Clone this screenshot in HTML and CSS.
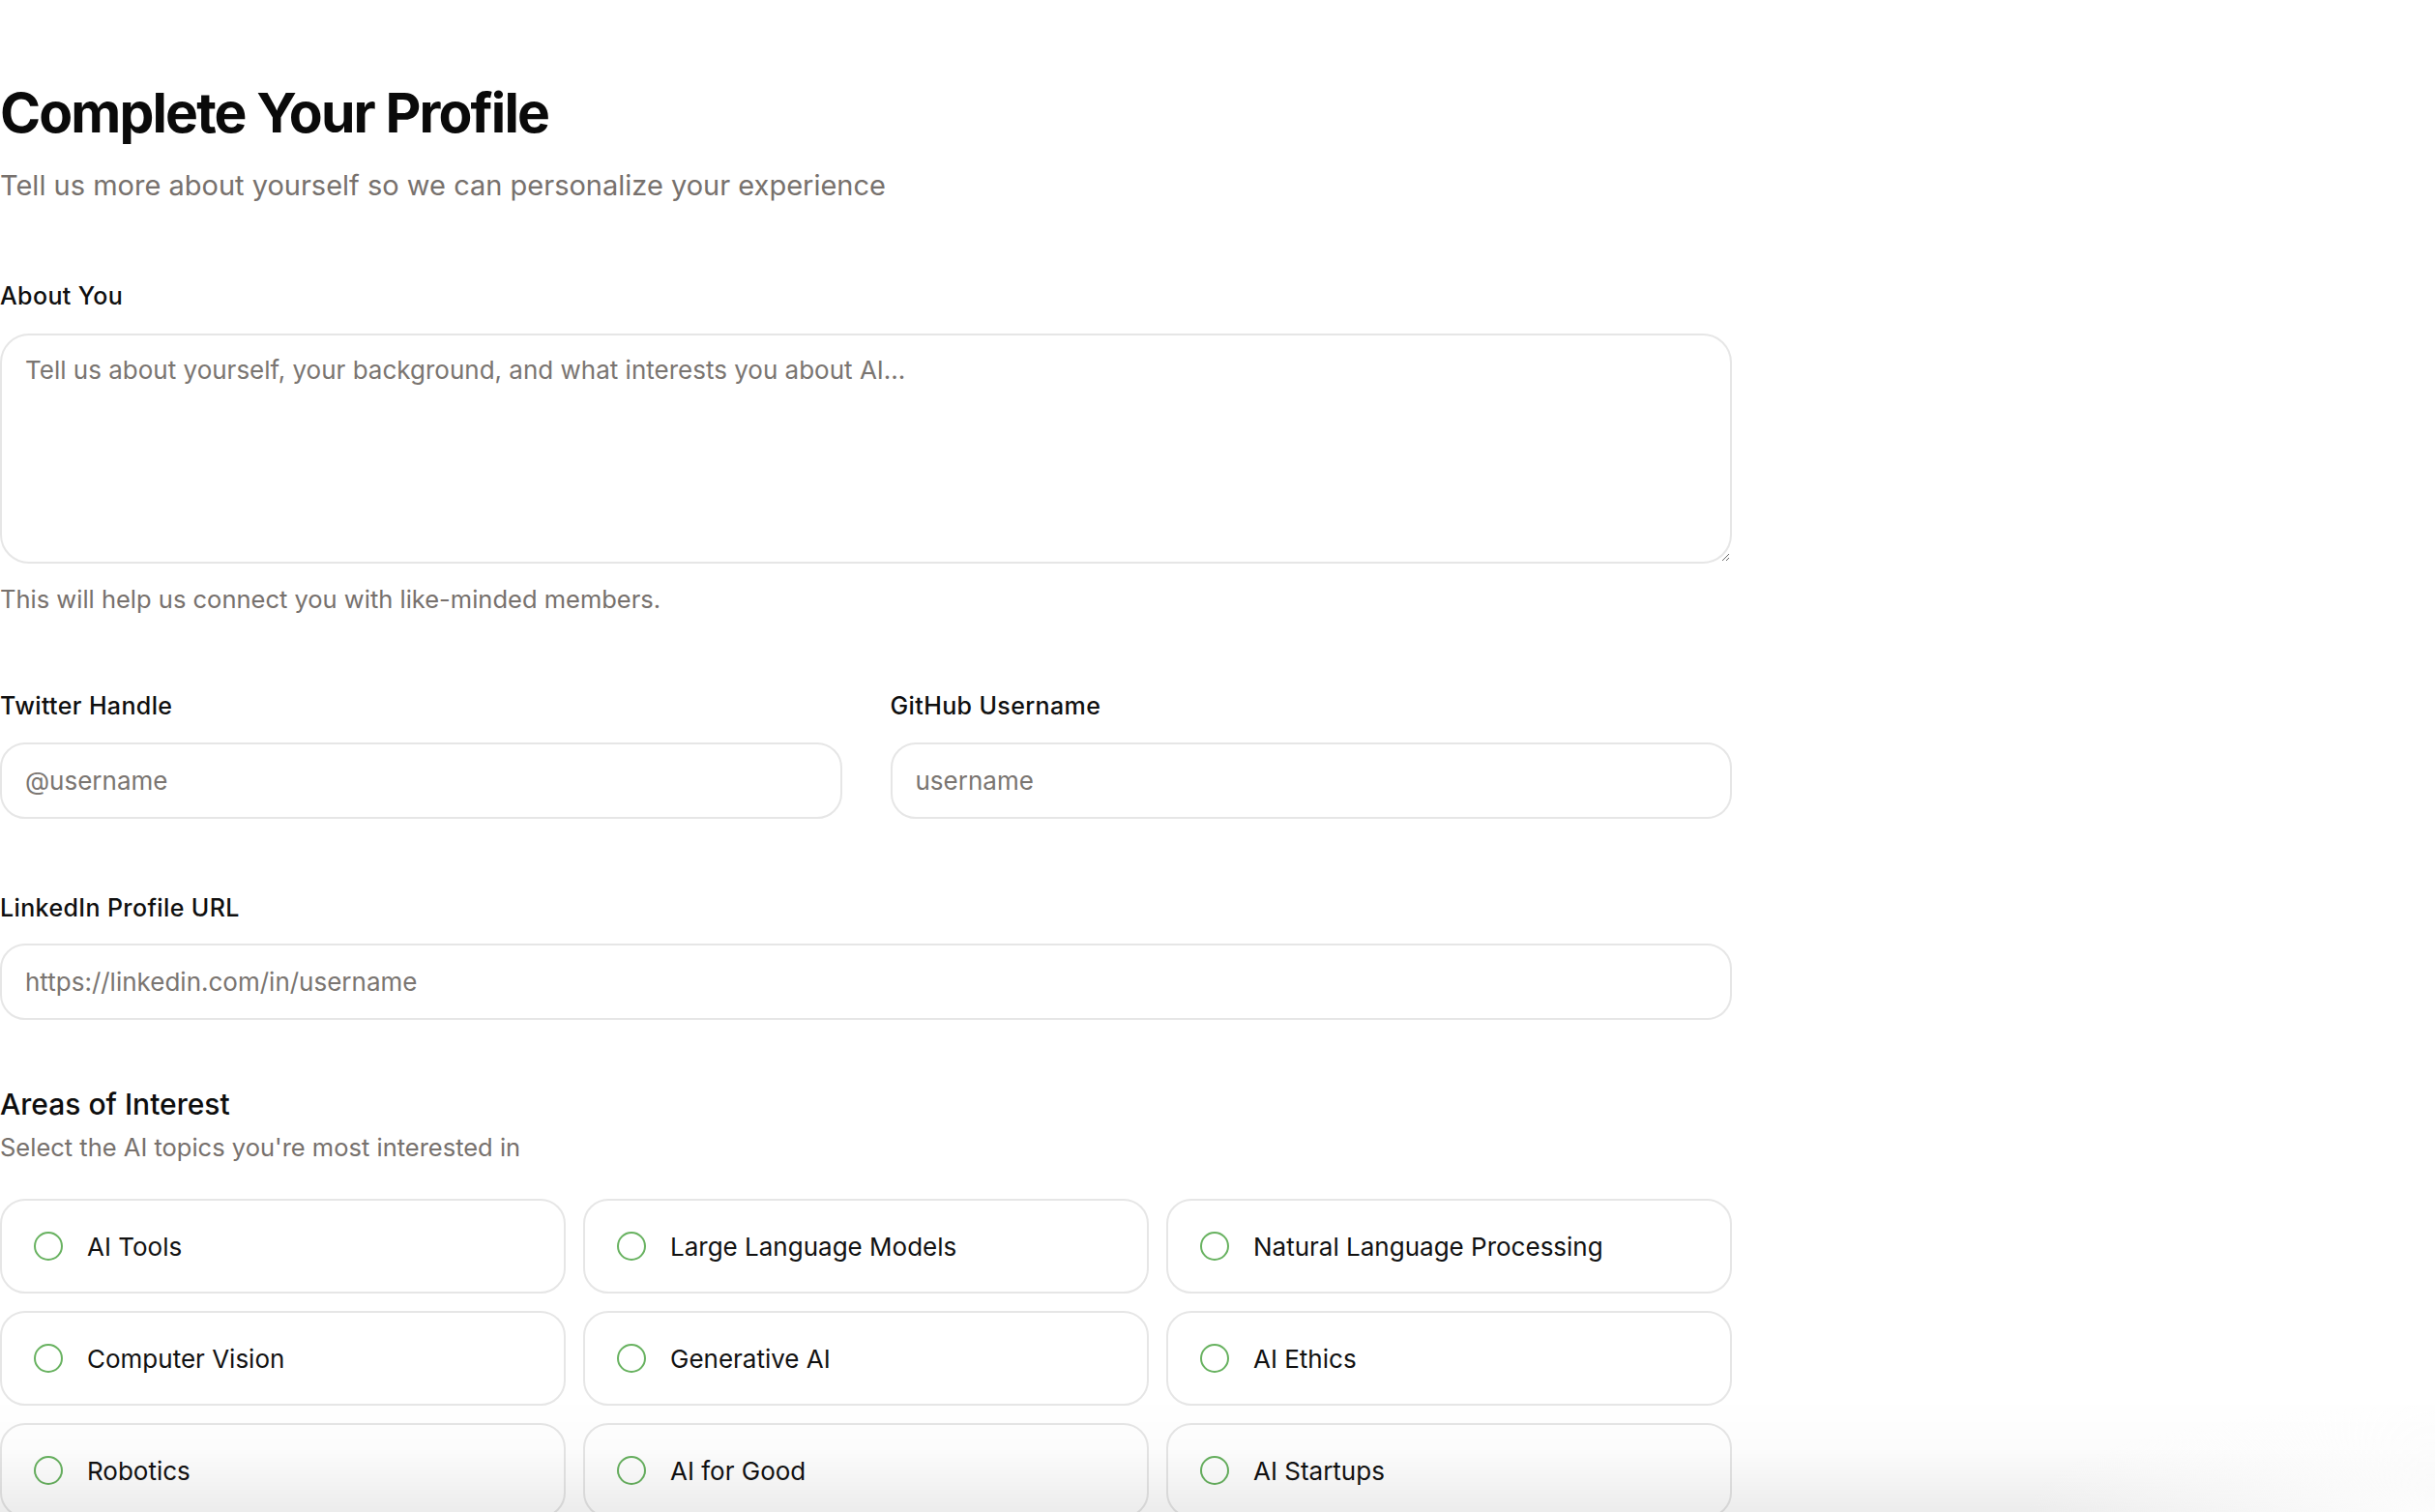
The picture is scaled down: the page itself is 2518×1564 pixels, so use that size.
FILE: index.html
```html
<!DOCTYPE html>
<html lang="en">
<head>
<meta charset="utf-8">
<title>Complete Your Profile</title>
<link rel="stylesheet" href="styles.css">
</head>
<body>
<main class="profile">
  <header class="intro">
    <h1 class="intro-title">Complete Your Profile</h1>
    <p class="intro-sub">Tell us more about yourself so we can personalize your experience</p>
  </header>

  <div class="field field-about">
    <label class="field-label" for="about">About You</label>
    <textarea id="about" class="control control-area" placeholder="Tell us about yourself, your background, and what interests you about AI..."></textarea>
    <p class="hint">This will help us connect you with like-minded members.</p>
  </div>

  <div class="field-row">
    <div class="field">
      <label class="field-label" for="twitter">Twitter Handle</label>
      <input id="twitter" class="control" type="text" placeholder="@username">
    </div>
    <div class="field">
      <label class="field-label" for="github">GitHub Username</label>
      <input id="github" class="control" type="text" placeholder="username">
    </div>
  </div>

  <div class="field field-linkedin">
    <label class="field-label" for="linkedin">LinkedIn Profile URL</label>
    <input id="linkedin" class="control" type="text" placeholder="https://linkedin.com/in/username">
  </div>

  <section class="interests">
    <h2 class="interests-title">Areas of Interest</h2>
    <p class="interests-sub">Select the AI topics you're most interested in</p>
    <div class="topic-grid">
      <div class="topic"><span class="radio"></span><span class="topic-name">AI Tools</span></div>
      <div class="topic"><span class="radio"></span><span class="topic-name">Large Language Models</span></div>
      <div class="topic"><span class="radio"></span><span class="topic-name">Natural Language Processing</span></div>
      <div class="topic"><span class="radio"></span><span class="topic-name">Computer Vision</span></div>
      <div class="topic"><span class="radio"></span><span class="topic-name">Generative AI</span></div>
      <div class="topic"><span class="radio"></span><span class="topic-name">AI Ethics</span></div>
      <div class="topic"><span class="radio"></span><span class="topic-name">Robotics</span></div>
      <div class="topic"><span class="radio"></span><span class="topic-name">AI for Good</span></div>
      <div class="topic"><span class="radio"></span><span class="topic-name">AI Startups</span></div>
    </div>
  </section>
</main>
<div class="bottom-fade"></div>
</body>
</html>
```

FILE: styles.css
```css
* { box-sizing: border-box; }

html, body {
  margin: 0;
  padding: 0;
  background: #ffffff;
}

body {
  font-family: Inter, Lato, "Liberation Sans", sans-serif;
  color: #0d0d0d;
  overflow: hidden;
  height: 1564px;
}

.profile {
  width: 1791px;
  padding-top: 82px;
}

.intro-title {
  margin: 0;
  font-size: 57px;
  line-height: 70px;
  font-weight: 700;
  letter-spacing: -0.033em;
  color: #0a0a0a;
}

.intro-sub {
  margin: 20px 0 0;
  font-size: 29px;
  line-height: 40px;
  color: #77716d;
}

.field {
  display: flex;
  flex-direction: column;
}

.field-about { margin-top: 78px; }

.field-label {
  font-size: 25px;
  line-height: 32px;
  font-weight: 500;
  color: #0f0f0f;
  margin-bottom: 23px;
  letter-spacing: 0.015em;
}

.control {
  width: 100%;
  height: 79px;
  border: 2px solid #e6e6e6;
  border-radius: 26px;
  padding: 0 24px;
  font-family: inherit;
  font-size: 26px;
  color: #222;
  background: #fff;
  outline: none;
}

.control::placeholder { color: #7a7571; }

.control-area {
  height: 238px;
  padding: 18px 24px;
  line-height: 36px;
  border-radius: 30px;
  resize: vertical;
}

.hint {
  margin: 19px 0 0;
  font-size: 25.5px;
  line-height: 36px;
  color: #77716d;
}

.field-row {
  margin-top: 76px;
  display: grid;
  grid-template-columns: 1fr 1fr;
  column-gap: 50px;
}

.field-row .field-label { margin-bottom: 22px; }

.field-linkedin { margin-top: 76px; }
.field-linkedin .field-label { margin-bottom: 21px; }

.interests { margin-top: 67px; }

.interests-title {
  margin: 0;
  font-size: 30px;
  line-height: 40px;
  font-weight: 500;
  color: #0d0d0d;
}

.interests-sub {
  margin: 7px 0 0;
  font-size: 25.5px;
  line-height: 36px;
  color: #77716d;
}

.topic-grid {
  margin-top: 35px;
  display: grid;
  grid-template-columns: repeat(3, 1fr);
  gap: 18px;
}

.topic {
  height: 98px;
  border: 2px solid #e6e6e6;
  border-radius: 26px;
  display: flex;
  align-items: center;
  gap: 25px;
  padding: 0 33px;
  background: #fff;
}

.radio {
  width: 30px;
  height: 30px;
  flex: none;
  border: 2.5px solid #68b260;
  border-radius: 50%;
}

.topic-name {
  font-size: 26px;
  color: #121212;
}

.bottom-fade {
  position: fixed;
  left: 0;
  right: 0;
  bottom: 0;
  height: 120px;
  pointer-events: none;
  background:
    radial-gradient(ellipse 420px 110px at 100% 100%, rgba(255,255,255,0.9), rgba(255,255,255,0) 100%),
    linear-gradient(to bottom, rgba(0,0,0,0) 0%, rgba(0,0,0,0.012) 45%, rgba(0,0,0,0.075) 100%);
}
```
